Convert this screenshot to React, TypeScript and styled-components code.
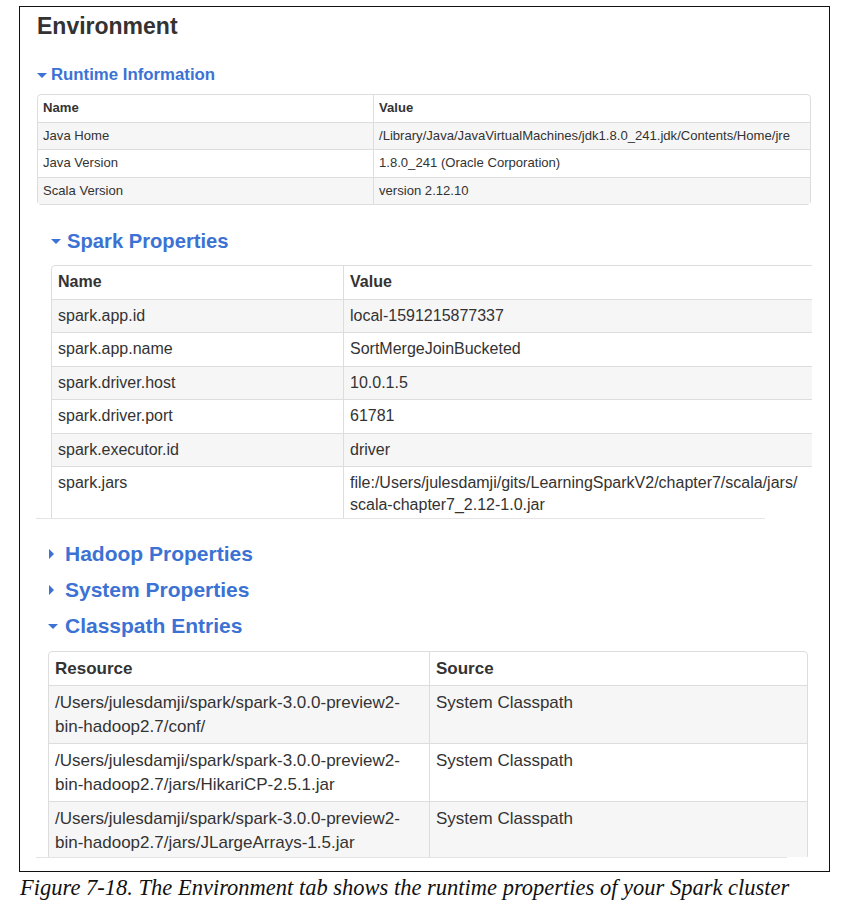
import React from "react";
import styled, { createGlobalStyle, css } from "styled-components";

const GlobalStyle = createGlobalStyle`
  html, body {
    margin: 0;
    padding: 0;
    background: #ffffff;
  }
  body {
    font-family: "Liberation Sans", Arial, Helvetica, sans-serif;
    color: #333333;
  }
  * { box-sizing: border-box; }
`;

const Page = styled.div`
  padding: 6px 0 0 19px;
  width: 863px;
`;

const Figure = styled.div`
  width: 811px;
  height: 866px;
  border: 1px solid #111111;
  padding-left: 17px;
  display: flex;
  flex-direction: column;
  overflow: hidden;
`;

const Title = styled.h2`
  margin: 5px 0 0 0;
  font-size: 23px;
  line-height: 28px;
  font-weight: bold;
  color: #333333;
`;

const BLUE = "#3b72d3";

const Heading = styled.h4<{ $size: number; $lh: number; $mt: number; $ml: number; $gap: number }>`
  display: flex;
  align-items: center;
  gap: ${(p) => p.$gap}px;
  margin: ${(p) => p.$mt}px 0 0 ${(p) => p.$ml}px;
  font-size: ${(p) => p.$size}px;
  line-height: ${(p) => p.$lh}px;
  font-weight: bold;
  color: ${BLUE};
`;

const CaretBox = styled.span<{ $w: number }>`
  width: ${(p) => p.$w}px;
  display: flex;
  align-items: center;
  justify-content: flex-start;
`;

const Caret = styled.span<{ $open: boolean; $s: number }>`
  display: inline-block;
  width: 0;
  height: 0;
  ${(p) =>
    p.$open
      ? css`
          border-left: ${p.$s}px solid transparent;
          border-right: ${p.$s}px solid transparent;
          border-top: ${p.$s}px solid ${BLUE};
        `
      : css`
          margin-left: 1px;
          border-top: ${p.$s}px solid transparent;
          border-bottom: ${p.$s}px solid transparent;
          border-left: ${p.$s}px solid ${BLUE};
        `}
`;

const Table = styled.table<{ $w: number; $font: number; $lh: number; $pad: string }>`
  width: ${(p) => p.$w}px;
  border-collapse: separate;
  border-spacing: 0;
  border: 1px solid #dddddd;
  border-radius: 4px;
  font-size: ${(p) => p.$font}px;
  line-height: ${(p) => p.$lh}px;
  color: #333333;
  table-layout: fixed;

  th, td {
    padding: ${(p) => p.$pad};
    text-align: left;
    vertical-align: top;
    white-space: nowrap;
    overflow: hidden;
  }
  th {
    font-weight: bold;
  }
  th + th, td + td {
    border-left: 1px solid #dddddd;
  }
  tbody td {
    border-top: 1px solid #dddddd;
  }
  tbody tr:nth-child(odd) td {
    background: #f6f6f6;
  }
`;

const RuntimeTable = styled(Table)`
  margin-top: 9px;
`;

const Clip = styled.div<{ $mt: number; $ml: number; $w: number; $h: number }>`
  margin: ${(p) => p.$mt}px 0 0 ${(p) => p.$ml}px;
  width: ${(p) => p.$w}px;
  height: ${(p) => p.$h}px;
  overflow: hidden;
  flex-shrink: 0;
`;

const CropLine = styled.div<{ $w: number }>`
  margin-left: -1px;
  width: ${(p) => p.$w}px;
  height: 1px;
  background: #e4e4e4;
  flex-shrink: 0;
`;

const Caption = styled.p`
  margin: 2px 0 0 1px;
  font-family: "Liberation Serif", "Times New Roman", serif;
  font-style: italic;
  font-size: 22.5px;
  line-height: 27px;
  color: #111111;
  white-space: nowrap;
`;

type HeadProps = { open: boolean; children: React.ReactNode; size: number; lh: number; mt: number; ml: number; gap: number; caret: number; box: number };

const SectionHeading = ({ open, children, size, lh, mt, ml, gap, caret, box }: HeadProps) => (
  <Heading $size={size} $lh={lh} $mt={mt} $ml={ml} $gap={gap}>
    <CaretBox $w={box}>
      <Caret $open={open} $s={caret} />
    </CaretBox>
    <span>{children}</span>
  </Heading>
);

const runtime = [
  ["Java Home", "/Library/Java/JavaVirtualMachines/jdk1.8.0_241.jdk/Contents/Home/jre"],
  ["Java Version", "1.8.0_241 (Oracle Corporation)"],
  ["Scala Version", "version 2.12.10"],
];

const spark: [string, React.ReactNode][] = [
  ["spark.app.id", "local-1591215877337"],
  ["spark.app.name", "SortMergeJoinBucketed"],
  ["spark.driver.host", "10.0.1.5"],
  ["spark.driver.port", "61781"],
  ["spark.executor.id", "driver"],
  [
    "spark.jars",
    <>
      file:/Users/julesdamji/gits/LearningSparkV2/chapter7/scala/jars/
      <br />
      scala-chapter7_2.12-1.0.jar
    </>,
  ],
];

const classpath = [
  ["/Users/julesdamji/spark/spark-3.0.0-preview2-", "bin-hadoop2.7/conf/"],
  ["/Users/julesdamji/spark/spark-3.0.0-preview2-", "bin-hadoop2.7/jars/HikariCP-2.5.1.jar"],
  ["/Users/julesdamji/spark/spark-3.0.0-preview2-", "bin-hadoop2.7/jars/JLargeArrays-1.5.jar"],
];

export default function App() {
  return (
    <>
      <GlobalStyle />
      <Page>
        <Figure>
          <Title>Environment</Title>

          <SectionHeading open size={16.8} lh={20} mt={25} ml={0} gap={4} caret={5} box={10}>
            Runtime Information
          </SectionHeading>
          <RuntimeTable $w={774} $font={13.1} $lh={14.5} $pad="6px 4px 6px 5px">
            <colgroup>
              <col style={{ width: 335 }} />
              <col />
            </colgroup>
            <thead>
              <tr>
                <th>Name</th>
                <th>Value</th>
              </tr>
            </thead>
            <tbody>
              {runtime.map(([k, v]) => (
                <tr key={k}>
                  <td>{k}</td>
                  <td>{v}</td>
                </tr>
              ))}
            </tbody>
          </RuntimeTable>

          <SectionHeading open size={20.2} lh={24} mt={24} ml={14} gap={6} caret={5} box={10}>
            Spark Properties
          </SectionHeading>
          <Clip $mt={12} $ml={14} $w={761} $h={253}>
            <Table $w={900} $font={16} $lh={22} $pad="5.25px 6px">
              <colgroup>
                <col style={{ width: 291 }} />
                <col />
              </colgroup>
              <thead>
                <tr>
                  <th>Name</th>
                  <th>Value</th>
                </tr>
              </thead>
              <tbody>
                {spark.map(([k, v]) => (
                  <tr key={k}>
                    <td>{k}</td>
                    <td>{v}</td>
                  </tr>
                ))}
              </tbody>
            </Table>
          </Clip>
          <CropLine $w={729} />

          <SectionHeading open={false} size={21} lh={24} mt={23} ml={11} gap={6} caret={5} box={11}>
            Hadoop Properties
          </SectionHeading>
          <SectionHeading open={false} size={21} lh={24} mt={12} ml={11} gap={6} caret={5} box={11}>
            System Properties
          </SectionHeading>
          <SectionHeading open size={21} lh={24} mt={12} ml={11} gap={6} caret={5} box={11}>
            Classpath Entries
          </SectionHeading>
          <Clip $mt={13} $ml={11} $w={761} $h={206}>
            <Table $w={760} $font={17} $lh={24} $pad="4.5px 6px">
              <colgroup>
                <col style={{ width: 380 }} />
                <col />
              </colgroup>
              <thead>
                <tr>
                  <th>Resource</th>
                  <th>Source</th>
                </tr>
              </thead>
              <tbody>
                {classpath.map(([a, b], i) => (
                  <tr key={i}>
                    <td>
                      {a}
                      <br />
                      {b}
                    </td>
                    <td>System Classpath</td>
                  </tr>
                ))}
              </tbody>
            </Table>
          </Clip>
          <CropLine $w={751} />
        </Figure>
        <Caption>Figure 7-18. The Environment tab shows the runtime properties of your Spark cluster</Caption>
      </Page>
    </>
  );
}
